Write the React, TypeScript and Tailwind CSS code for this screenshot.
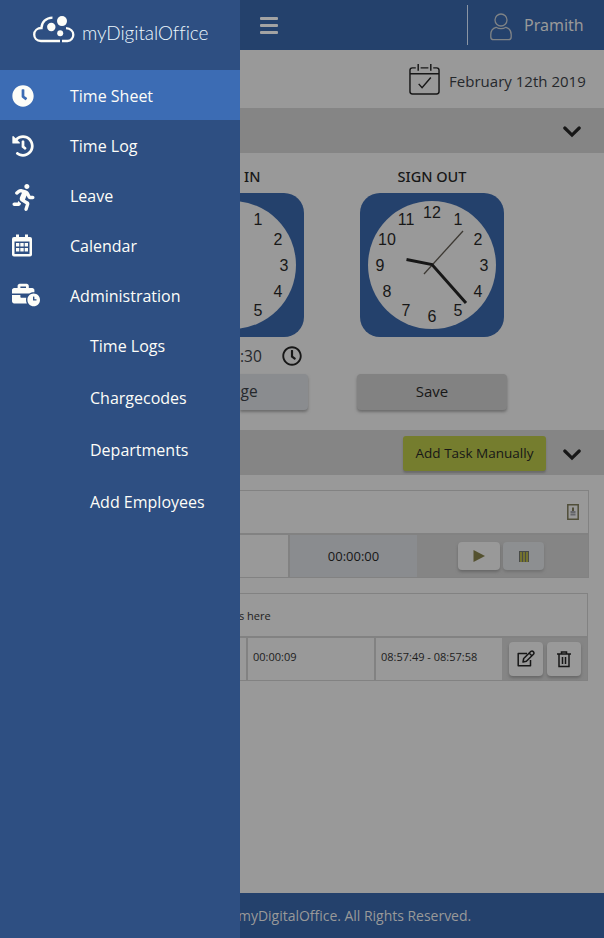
import type { ReactNode } from "react";
import { FaBusinessTime, FaClock, FaHistory, FaRegClock, FaRunning } from "react-icons/fa";

const numerals = [
  { n: 12, x: 72, y: 26 }, { n: 1, x: 98, y: 33 }, { n: 2, x: 118, y: 53 },
  { n: 3, x: 124, y: 79 }, { n: 4, x: 118, y: 105 }, { n: 5, x: 98, y: 124 },
  { n: 6, x: 72, y: 130 }, { n: 7, x: 46, y: 124 }, { n: 8, x: 27, y: 105 },
  { n: 9, x: 20, y: 79 }, { n: 10, x: 27, y: 53 }, { n: 11, x: 46, y: 33 },
];

function Clock() {
  return (
    <svg width="144" height="144" viewBox="0 0 144 144" className="block shrink-0">
      <rect width="144" height="144" rx="20" fill="#24416c" />
      <circle cx="72" cy="72" r="64" fill="#999999" />
      <g fill="#171717" fontFamily="Liberation Sans, sans-serif" fontSize="16" textAnchor="middle">
        {numerals.map((m) => (
          <text key={m.n} x={m.x} y={m.y - 0.6}>{m.n}</text>
        ))}
      </g>
      <path d="M64 81 103 38" stroke="#3d3933" strokeWidth="1.3" />
      <path d="M46.500 66.500 72 71.500 106 110" fill="none" stroke="#171717" strokeWidth="3" />
    </svg>
  );
}

function HalfClock() {
  return (
    <svg width="64" height="144" viewBox="80 0 64 144" className="block shrink-0">
      <path d="M80 0H124a20 20 0 0 1 20 20V124a20 20 0 0 1-20 20H80z" fill="#24416c" />
      <circle cx="72" cy="72" r="64" fill="#999999" />
      <g fill="#171717" fontFamily="Liberation Sans, sans-serif" fontSize="16" textAnchor="middle">
        {numerals.slice(1, 6).map((m) => (
          <text key={m.n} x={m.x} y={m.y - 0.6}>{m.n}</text>
        ))}
      </g>
    </svg>
  );
}

function Chevron() {
  return (
    <svg width="18" height="12" viewBox="0 0 18 12" fill="none" stroke="#171717" strokeWidth="3.200">
      <path d="M1.800 2 9 9.100 16.200 2" strokeLinejoin="miter" strokeLinecap="round" />
    </svg>
  );
}

function CloudLogo() {
  return (
    <svg width="42" height="28" viewBox="0 0 42 28" fill="none" stroke="#fdfdf8" strokeWidth="2.300" strokeLinecap="butt">
      <path d="M27 25H8C3.500 25 1.200 21.800 1.200 18.600 1.200 14.500 4.500 12 8.500 12 8.500 6 13 1.800 19.500 1.600" />
      <path d="M29 25H34.500C38 25 40.300 22 40.300 18.800 40.300 15.300 37.500 12.500 33 12.100" />
      <g fill="#fdfdf8" stroke="none">
        <circle cx="29" cy="5.100" r="5" />
        <circle cx="18.300" cy="11" r="4.200" />
        <circle cx="27.200" cy="17.300" r="3" />
      </g>
    </svg>
  );
}

function CalendarGrid() {
  return (
    <svg width="20" height="23" viewBox="0 0 20 23" fill="#fdfdf8" className="-mt-0.5">
      <path fillRule="evenodd" d="M4 0.500h3V3h6V0.500h3V3h2q2 0 2 2v15.500q0 2-2 2H2q-2 0-2-2V5q0-2 2-2h2zM2.500 7.500v12.500h15V7.500z" />
      <path d="M4 9h3.300v3.500H4zM8.300 9h3.400v3.500H8.300zM12.700 9H16v3.500h-3.300zM4 14h3.300v3.500H4zM8.300 14h3.400v3.500H8.300zM12.700 14H16v3.500h-3.300z" />
    </svg>
  );
}

function MenuItem({ icon, label, active }: { icon: ReactNode; label: string; active?: boolean }) {
  return (
    <li className={active ? "flex h-[50px] items-center bg-[#3c6cb4] pl-3" : "flex h-[50px] items-center pl-3"}>
      <span className="flex w-[58px] items-center pt-0.5">{icon}</span>
      <span className="pt-0.5">{label}</span>
    </li>
  );
}

function Sidebar() {
  return (
    <aside className="h-full w-60 shrink-0 bg-[#2e4f82] text-base leading-6 text-[#fdfdf8]">
      <div className="flex h-[70px] pl-[33px] pt-4">
        <CloudLogo />
        <span className="ml-[7px] mt-[3px] font-[Lato] text-[19px] font-light leading-7 tracking-[-0.06px] text-[#ecf8fd]">
          myDigitalOffice
        </span>
      </div>
      <ul>
        <MenuItem active icon={<FaClock size={22} />} label="Time Sheet" />
        <MenuItem icon={<FaHistory size={22} />} label="Time Log" />
        <MenuItem icon={<FaRunning size={27} className="-ml-0.5 mt-0.5" />} label="Leave" />
        <MenuItem icon={<CalendarGrid />} label="Calendar" />
        <MenuItem icon={<FaBusinessTime size={28} className="-mt-0.5" />} label="Administration" />
      </ul>
      <ul className="pl-[90px]">
        <li className="h-[52px] pt-[14px]">Time Logs</li>
        <li className="h-[52px] pt-[14px]">Chargecodes</li>
        <li className="h-[52px] pt-[14px]">Departments</li>
        <li className="h-[52px] pt-[14px]">Add Employees</li>
      </ul>
    </aside>
  );
}

function Header() {
  return (
    <header className="flex h-[50px] shrink-0 items-center bg-[#24416c] text-[#999999]">
      <div className="ml-5 flex w-[18px] flex-col gap-1">
        <i className="h-[3px] rounded-[1px] bg-[#a3a3a3]" />
        <i className="h-[3px] rounded-[1px] bg-[#a3a3a3]" />
        <i className="h-[3px] rounded-[1px] bg-[#a3a3a3]" />
      </div>
      <div className="ml-auto h-10 w-px bg-[#8b95a4]" />
      <svg className="ml-[22px] mt-[3px]" width="22" height="28" viewBox="0 0 22 28" fill="none" stroke="#7f8386" strokeWidth="1.300">
        <circle cx="11" cy="7" r="6" />
        <path d="M6 14.300C2.500 15.300.8 18 .8 21.500V24q0 2.700 2.700 2.700h15q2.700 0 2.700-2.700v-2.500c0-3.500-1.700-6.200-5.200-7.200C13 16 9 16 6 14.300z" />
      </svg>
      <span className="ml-3 mr-5 w-[60px] whitespace-nowrap font-['Noto_Sans'] text-base">Pramith</span>
    </header>
  );
}

function SignPanels() {
  return (
    <section className="flex h-[277px] shrink-0 text-[#171717]">
      <div className="w-[92px] shrink-0">
        <h2 className="mt-[11px] h-[29px] pl-1 font-['Noto_Sans'] text-[14.5px] font-medium leading-6">IN</h2>
        <HalfClock />
        <div className="flex h-[37px] w-[62px] items-center justify-between text-base">
          <span className="pt-0.5 text-[15.5px] text-[#25282c]">:30</span>
          <FaRegClock size={20} />
        </div>
        <button className="flex h-9 w-[68px] items-center rounded-r bg-[#8a8c8f] text-[15.5px] text-[#25282c] shadow-[0_2px_3px_#6b6b6b]">
          <span className="-ml-[9px]">nge</span>
        </button>
      </div>
      <div className="flex w-[200px] shrink-0 flex-col items-center">
        <h2 className="mt-[11px] h-[29px] font-['Noto_Sans'] text-[14.5px] font-medium leading-6">SIGN OUT</h2>
        <Clock />
        <button className="mt-[37px] h-9 w-[150px] rounded bg-[#828282] pb-0.5 text-[15px] shadow-[0_2px_3px_#6b6b6b]">Save</button>
      </div>
    </section>
  );
}

function TimerTable() {
  return (
    <section className="mt-[15px] w-[349px] shrink-0 border-y border-r border-[#828282]">
      <div className="flex h-[42px] items-center justify-end pr-[9px]">
        <svg width="12" height="16" viewBox="0 0 12 16" fill="none" stroke="#504e39">
          <path d="M.8.8h10.400v14.400H.8z" strokeWidth="1.500" />
          <path d="M6 3.500v3.500" strokeWidth="2" />
          <path d="M3.500 8h5M3.500 10.500h5" stroke="#65666a" strokeWidth="2" />
        </svg>
      </div>
      <div className="flex h-11 border-t-2 border-[#828282]">
        <div className="w-12" />
        <div className="flex w-[129px] items-center justify-center border-l-2 border-[#828282] bg-[#8a8c8f] pt-0.5 text-[13px] text-[#171717]">00:00:00</div>
        <div className="flex grow gap-[3px] bg-[#858585] pl-[41px] pt-[7px]">
          <button className="flex h-7 w-[42px] items-center justify-center rounded bg-[#999999] shadow-[0_2px_3px_#686868]">
            <svg width="12" height="12" viewBox="0 0 12 12" fill="#54512f"><path d="M.5 0v12L12 6z" /></svg>
          </button>
          <button className="flex h-7 w-[41px] items-center justify-center rounded bg-[#8d8f91] shadow-[0_2px_3px_#727272]">
            <svg width="10" height="11" viewBox="0 0 10 11"><path fill="#74732f" d="M0 0h10v11H0z" /><path stroke="#484b48" d="M0 .5h10M.5 1v10M3.500 1v10M6.500 1v10M9.500 1v10" /></svg>
          </button>
        </div>
      </div>
    </section>
  );
}

function TaskTable() {
  return (
    <section className="mt-[15px] w-[348px] shrink-0 border-y border-r border-[#828282] text-[11px] text-[#1d1d1d]">
      <div className="flex h-[42px] items-center pt-0.5"><span className="-ml-px">s here</span></div>
      <div className="flex h-11 border-t-2 border-[#828282]">
        <div className="w-1.5" />
        <div className="w-32 border-l-2 border-[#828282] pl-[5px] pt-[11px]">00:00:09</div>
        <div className="w-32 whitespace-nowrap border-l-2 border-[#828282] pl-[5px] pt-[11px]">08:57:49 - 08:57:58</div>
        <div className="flex grow gap-1 bg-[#858585] pl-[7px] pt-1">
          <button className="flex h-[34px] w-[34px] items-center justify-center rounded bg-[#999999] shadow-[0_2px_3px_#686868]">
            <svg width="18" height="18" viewBox="0 0 18 18" fill="none" stroke="#171717" strokeWidth="1.500">
              <path d="M10 3.500H1.200v12.300h12.300V10M6 12l.7-3.500L14 1.300Q15.200.500 16.300 1.600T16.700 4L9.400 11.300zM12.300 3.200l2.500 2.500" strokeLinejoin="round" />
            </svg>
          </button>
          <button className="flex h-[34px] w-[34px] items-center justify-center rounded bg-[#999999] shadow-[0_2px_3px_#686868]">
            <svg width="14" height="17" viewBox="0 0 14 17" fill="none" stroke="#171717" strokeWidth="1.500">
              <path d="M0 3h14M4.500 3V1h5v2M2 3v12.500h10V3M5.500 6v7M8.500 6v7" />
            </svg>
          </button>
        </div>
      </div>
    </section>
  );
}

export default function App() {
  return (
    <div className="flex h-[938px] w-[604px] overflow-hidden bg-[#999999] font-['Open_Sans',sans-serif]">
      <Sidebar />
      <main className="flex h-full w-[364px] flex-col overflow-hidden">
        <Header />
        <div className="flex h-[58px] shrink-0 items-center">
          <svg className="ml-auto" width="31" height="31" viewBox="0 0 32 32" fill="none" stroke="#171717" strokeWidth="1.500">
            <path d="M7 4H3.500Q1 4 1 6.500v22Q1 31 3.500 31h25q2.500 0 2.500-2.500v-22Q31 4 28.500 4H25M12 4h8M1 10h30M9.500 0v7M22.500 0v7M10 20.500l3.500 4L22.500 14" />
          </svg>
          <span className="ml-[9px] mr-[18px] w-[137px] whitespace-nowrap pt-1 text-[15px] tracking-[0.02px] text-[#25282c]">February 12th 2019</span>
        </div>
        <div className="flex h-[45px] shrink-0 items-center justify-end bg-[#858585] pr-[23px] pt-0.5"><Chevron /></div>
        <SignPanels />
        <div className="flex h-[45px] shrink-0 items-center justify-end bg-[#858585] pr-[23px]">
          <button className="mr-[17px] mt-0.5 h-[35px] w-[143px] whitespace-nowrap rounded-[3px] bg-[#757d2e] text-[13.5px] text-[#171717] shadow-[0_2px_2px_#6b6b6b]">Add Task Manually</button>
          <span className="pt-1"><Chevron /></span>
        </div>
        <TimerTable />
        <TaskTable />
        <footer className="mt-auto flex h-[45px] shrink-0 items-center bg-[#24416c] text-[14px] text-[#999999]">
          <span className="-ml-0.5 whitespace-nowrap tracking-[-0.02px]">myDigitalOffice. All Rights Reserved.</span>
        </footer>
      </main>
    </div>
  );
}
